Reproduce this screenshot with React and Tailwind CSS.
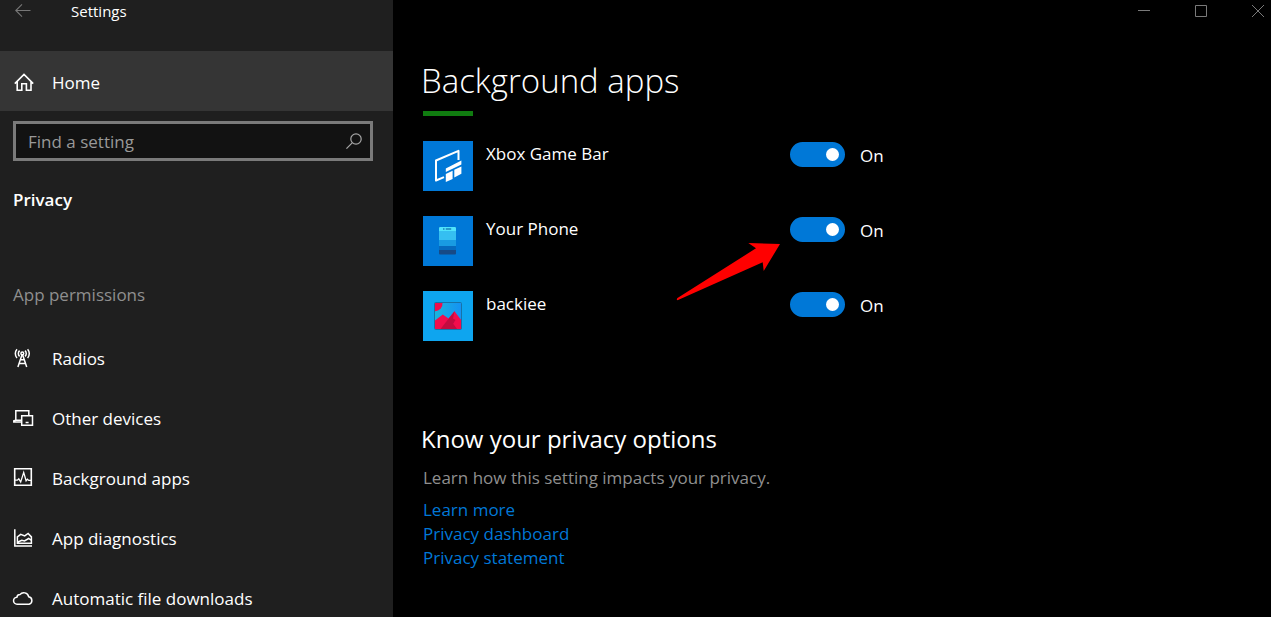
import React, { useState } from 'react';

const HomeIcon = () => (
    <svg viewBox="0 0 24 24" className="size-6 shrink-0" fill="none" stroke="currentColor" strokeWidth="1.6" aria-hidden="true">
        <path d="M2.8 14.6 12 5.4l9.2 9.2M5.2 12.6v8.6h4.6v-6.4h4.6v6.4h4.6v-8.6" />
    </svg>
);

const RadiosIcon = () => (
    <svg viewBox="0 0 24 24" className="size-6 shrink-0" fill="none" stroke="currentColor" strokeWidth="1.5" aria-hidden="true">
        <circle cx="10.3" cy="6.4" r="1.4" />
        <path d="M9.9 8 5.9 20M10.7 8l4 12M8.4 12.8h3.8M7.4 16.6h5.8" />
        <path d="M7.6 3.6a4 4 0 0 0 0 5.8M13 3.6a4 4 0 0 1 0 5.8M5 2.2a6.6 6.6 0 0 0 0 8.8M15.6 2.2a6.6 6.6 0 0 1 0 8.8" />
    </svg>
);

const DevicesIcon = () => (
    <svg viewBox="0 0 24 24" className="size-6 shrink-0" fill="none" stroke="currentColor" strokeWidth="1.5" aria-hidden="true">
        <path d="M9 13.2H3.8V3.8h13v4.6M3.8 13.2l-2 .6v1.2H9" />
        <path d="M9.7 8.7h10.8v9.6H9.7zM13.6 15.5h3" />
    </svg>
);

const BackgroundAppsIcon = () => (
    <svg viewBox="0 0 24 24" className="size-6 shrink-0" fill="none" stroke="currentColor" strokeWidth="1.6" aria-hidden="true">
        <path d="M2.7 1.8h16.6v16.4H2.7z" />
        <path d="M3 13.2h2.4l1.4-1.4 1.9 3.2 3-9.6 2.4 8.4 1.3-1.6 1.3 1.2h2.4" strokeWidth="1.3" />
    </svg>
);

const DiagnosticsIcon = () => (
    <svg viewBox="0 0 24 24" className="size-6 shrink-0" fill="none" stroke="currentColor" strokeWidth="1.5" aria-hidden="true">
        <path d="M2.8 2.2v16.9H20" />
        <path d="M5.4 16.3V9.8l3.3-2.5 4 1.6 3.4-2.4 3.3 3.4v6.4zM5.4 15.3l4.4-2 2.7.6 4.2-2.4 2.7 2" />
    </svg>
);

const CloudIcon = () => (
    <svg viewBox="0 0 24 24" className="size-6 shrink-0" fill="none" stroke="currentColor" strokeWidth="1.5" aria-hidden="true">
        <path d="M5.2 17.2a3.5 3.5 0 0 1-.3-7 3.2 3.2 0 0 1 3-2.6 5 5 0 0 1 8.8 2.2 3.8 3.8 0 0 1 .4 7.4z" />
    </svg>
);

const GameBarLogo = () => (
    <svg viewBox="0 0 50 50" className="size-full" aria-hidden="true">
        <path d="M21 36.2 13 39.5V19.5L35.5 9.8V19" fill="none" stroke="#fff" strokeWidth="2" strokeLinejoin="round" />
        <path d="M22.8 27.4 38.4 19.5v4L22.8 31z" fill="#fff" />
        <path d="M22.8 33 29.6 29.7v8.2L22.8 41zM31.3 28.8 38.4 25.4v7.4l-7.1 3.6z" fill="#fff" />
    </svg>
);

const PhoneLogo = () => (
    <svg viewBox="0 0 50 50" className="size-full" aria-hidden="true">
        <rect x="16" y="11" width="17" height="27.5" rx="1" fill="#174a86" />
        <path d="M16 30h17v4H16z" fill="#0669bd" />
        <path d="M16 24h17v6H16z" fill="#199be2" />
        <path d="M16 15h17v9H16z" fill="#35bff1" />
        <path d="M17 11h15a1 1 0 0 1 1 1v3H16v-3a1 1 0 0 1 1-1z" fill="#50e3fb" />
        <path d="M20 12.2h1.5v1.5H20zM22.8 12.2h5.4v1.5h-5.4z" fill="#1a83b8" />
    </svg>
);

const BackieeLogo = () => (
    <svg viewBox="0 0 50 50" className="size-full" aria-hidden="true">
        <defs>
            <linearGradient id="backiee-sky" x1="0" y1="0" x2="1" y2="0">
                <stop offset="0" stopColor="#18b6dc" />
                <stop offset="1" stopColor="#1591f4" />
            </linearGradient>
        </defs>
        <rect x="11.5" y="11.5" width="27" height="27" rx="1" fill="url(#backiee-sky)" />
        <path d="M12 12h7.5a7.5 7.5 0 0 1-7.5 8.2z" fill="#f20d4c" />
        <path d="M12 29.6 19.8 23.4l5.7 4 6-7.2 7 9.3v8.5H12z" fill="#f20d4c" />
        <path d="M17.5 38 31.5 20.2 30 27.5l2.5 1.5-2.3 3.8L34 38z" fill="#c20b40" />
        <rect x="11.5" y="11.5" width="27" height="27" rx="1" fill="none" stroke="#1772a8" strokeWidth="1" />
    </svg>
);

const navItems = [
    { label: 'Radios', Icon: RadiosIcon },
    { label: 'Other devices', Icon: DevicesIcon },
    { label: 'Background apps', Icon: BackgroundAppsIcon },
    { label: 'App diagnostics', Icon: DiagnosticsIcon },
    { label: 'Automatic file downloads', Icon: CloudIcon },
];

const apps = [
    { id: 'game-bar', name: 'Xbox Game Bar', Logo: GameBarLogo, tile: 'bg-[#0078d7]' },
    { id: 'your-phone', name: 'Your Phone', Logo: PhoneLogo, tile: 'bg-[#0078d7]', pointed: true },
    { id: 'backiee', name: 'backiee', Logo: BackieeLogo, tile: 'bg-[#0ea5ef]' },
];

const links = ['Learn more', 'Privacy dashboard', 'Privacy statement'];

const AppRow = ({ app }) => {
    const [enabled, setEnabled] = useState(true);
    const { id, name, Logo, tile, pointed } = app;

    return (
        <li className="flex items-start h-[50px]">
            <div className={`size-[50px] shrink-0 ${tile}`}>
                <Logo />
            </div>
            <label htmlFor={id} className="w-[304px] ml-[13px] leading-[26px]">{name}</label>
            <div className="relative flex items-center gap-[15px] h-[27px]">
                <input
                    id={id}
                    type="checkbox"
                    role="switch"
                    checked={enabled}
                    onChange={(e) => setEnabled(e.target.checked)}
                    className="appearance-none flex items-center justify-start checked:justify-end w-[55px] h-[25px] px-1 rounded-full border-2 border-white checked:border-[#0078d7] checked:bg-[#0078d7] before:size-[13px] before:rounded-full before:bg-white"
                />
                <span className="pt-0.5">{enabled ? 'On' : 'Off'}</span>
                {pointed && (
                    <svg viewBox="0 1 104 60" className="absolute top-full right-full w-[104px] h-[60px] mr-2.5" aria-hidden="true">
                        <path d="M104 2 72.3 1 80 6.3 1.5 56q-1.5 1.5 0 2.3L86.7 20.3l1 8.7z" fill="#f00" />
                    </svg>
                )}
            </div>
        </li>
    );
};

const Sidebar = () => {
    const [query, setQuery] = useState('');

    return (
        <aside className="flex flex-col w-[393px] shrink-0 overflow-hidden bg-[#1f1f1f]">
            <header className="flex items-start h-[51px] shrink-0 pl-[15px] gap-10">
                <button type="button" aria-label="Back" className="text-[#777]">
                    <svg viewBox="0 0 16 22" className="w-4 h-[22px]" fill="none" stroke="currentColor" strokeWidth="1.1">
                        <path d="M15.5 10.5H.8M7 4.3.8 10.5 7 16.7" />
                    </svg>
                </button>
                <span className="text-[15px] leading-[22px]">Settings</span>
            </header>
            <a href="#home" className="flex items-center h-[60px] shrink-0 gap-4 pl-3 bg-[#353535]">
                <HomeIcon />
                <span className="pt-1">Home</span>
            </a>
            <div className="flex items-center h-10 shrink-0 mt-2.5 ml-[13px] mr-5 pr-2 border-3 border-[#7a7a7a] bg-[#121212]">
                <input
                    type="text"
                    aria-label="Find a setting"
                    placeholder="Find a setting"
                    value={query}
                    onChange={(e) => setQuery(e.target.value)}
                    className="flex-1 min-w-0 pt-0.5 pl-3 placeholder:text-[#999] focus:outline-none"
                />
                <svg viewBox="0 0 16 16" className="size-4 shrink-0 text-[#a6a6a6]" fill="none" stroke="currentColor" strokeWidth="1.2" aria-hidden="true">
                    <circle cx="10" cy="6" r="5.2" />
                    <path d="M6.2 9.8.4 15.6" />
                </svg>
            </div>
            <h2 className="mt-[25px] pl-[13px] font-semibold">Privacy</h2>
            <h3 className="mt-[67px] pl-[13px] text-[#8f8f8f]">App permissions</h3>
            <nav className="mt-5">
                {navItems.map(({ label, Icon }) => (
                    <a key={label} href="#" className="flex items-center h-[60px] gap-4 pl-3">
                        <Icon />
                        <span>{label}</span>
                    </a>
                ))}
            </nav>
        </aside>
    );
};

const WindowControls = () => (
    <div className="flex justify-end gap-[45px] h-[51px] pt-[5px] pr-[7px] text-[#7a7a7a]">
        <button type="button" aria-label="Minimize" className="size-3">
            <svg viewBox="0 0 12 12" className="size-3" stroke="currentColor"><path d="M0 5.5h12" /></svg>
        </button>
        <button type="button" aria-label="Maximize" className="size-3">
            <svg viewBox="0 0 12 12" className="size-3" fill="none" stroke="currentColor"><path d="M.5.5h11v11H.5z" /></svg>
        </button>
        <button type="button" aria-label="Close" className="size-3">
            <svg viewBox="0 0 12 12" className="size-3" stroke="currentColor"><path d="m0 0 12 12M12 0 0 12" /></svg>
        </button>
    </div>
);

const App = () => {
    return (
        <div className="flex h-screen overflow-hidden bg-black text-white text-[17px] leading-7 font-['Segoe_UI','Open_Sans',sans-serif]">
            <Sidebar />
            <main className="flex-1 min-w-0">
                <WindowControls />
                <h1 className="h-[60px] pl-7 text-[33px] leading-[60px] font-light">Background apps</h1>
                <div className="pl-[30px]">
                    <div className="w-[50px] h-[5px] bg-[#107c10]" />
                    <ul className="flex flex-col gap-[25px] mt-[25px]">
                        {apps.map((app) => (
                            <AppRow key={app.id} app={app} />
                        ))}
                    </ul>
                </div>
                <section className="mt-[82px] pl-7">
                    <h2 className="text-[24px] leading-8">Know your privacy options</h2>
                    <p className="mt-[9px] pl-0.5 text-[#8f8f8f]">Learn how this setting impacts your privacy.</p>
                    <ul className="mt-1.5 pl-0.5 leading-6 text-[#0078d7]">
                        {links.map((link) => (
                            <li key={link}>
                                <a href="#">{link}</a>
                            </li>
                        ))}
                    </ul>
                </section>
            </main>
        </div>
    );
};

export default App;
